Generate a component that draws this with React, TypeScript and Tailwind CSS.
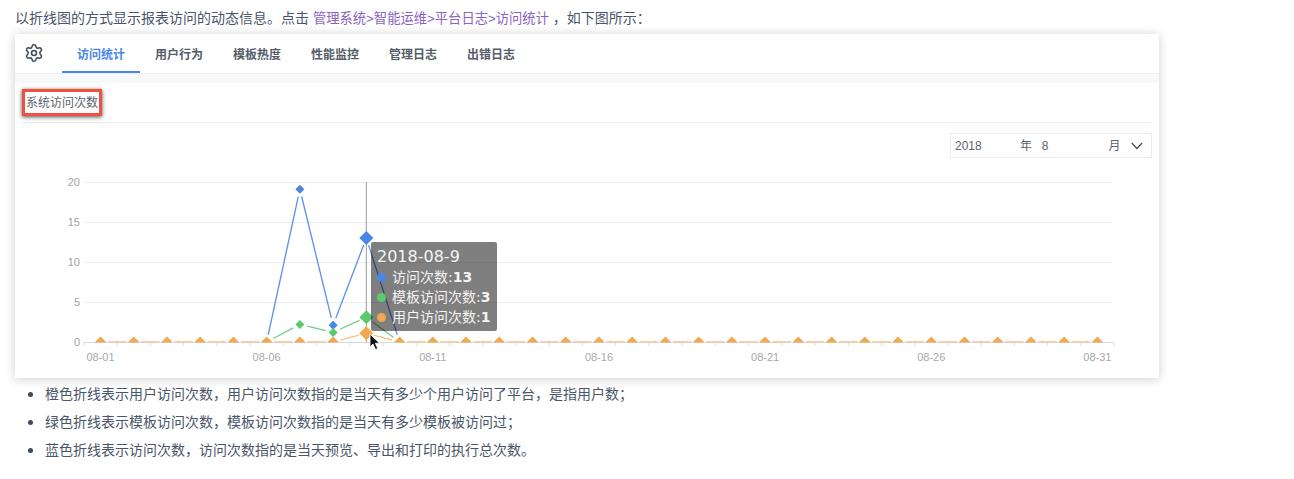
import React from 'react';
import { Settings } from 'lucide-react';

const FONT = "font-['Liberation_Sans','Noto_Sans_CJK_SC',sans-serif]";

const tabs = ['访问统计', '用户行为', '模板热度', '性能监控', '管理日志', '出错日志'];
const notes = [
  '橙色折线表示用户访问次数，用户访问次数指的是当天有多少个用户访问了平台，是指用户数；',
  '绿色折线表示模板访问次数，模板访问次数指的是当天有多少模板被访问过；',
  '蓝色折线表示访问次数，访问次数指的是当天预览、导出和打印的执行总次数。',
];

// chart coordinates are relative to the chart svg (1144 wide, card left edge = 0)
const X0 = 85.5;
const STEP = 33.23;
const BASE = 218;
const UNIT = 8;
const px = (i: number) => X0 + STEP * i;
const py = (v: number) => BASE - v * UNIT;

const zeros = Array.from({ length: 31 }, () => 0);
const withValues = (vals: Record<number, number>) => zeros.map((z, i) => vals[i] ?? z);

const series = [
  { line: '#5b8fe8', dot: '#4a86e8', data: withValues({ 6: 19.1, 7: 2.1, 8: 13 }), from: 5, to: 9, size: 4.5 },
  { line: '#6dd07f', dot: '#5cc96f', data: withValues({ 6: 2.2, 7: 1.2, 8: 3.1 }), from: 5, to: 9, size: 4.5 },
  { line: '#f5c283', dot: '#f0a94f', data: withValues({ 8: 1.1 }), from: 0, to: 30, size: 5.5 },
];

function gappedSegments(data: number[], from: number, to: number, gap: number) {
  const segs: { x1: number; y1: number; x2: number; y2: number }[] = [];
  for (let i = from; i < to; i++) {
    const ax = px(i);
    const ay = py(data[i]);
    const bx = px(i + 1);
    const by = py(data[i + 1]);
    const len = Math.hypot(bx - ax, by - ay);
    const ux = (bx - ax) / len;
    const uy = (by - ay) / len;
    segs.push({ x1: ax + ux * gap, y1: ay + uy * gap, x2: bx - ux * gap, y2: by - uy * gap });
  }
  return segs;
}

const Diamond = ({ x, y, r, color }: { x: number; y: number; r: number; color: string }) => (
  <polygon points={`${x},${y - r} ${x + r},${y} ${x},${y + r} ${x - r},${y}`} fill={color} />
);

function LineChart() {
  const gridY = [0, 5, 10, 15, 20];
  return (
    <svg width="1144" height="240" className="block" viewBox="0 0 1144 240">
      <defs>
        <clipPath id="plot">
          <rect x="60" y="40" width="1060" height={BASE - 40 + 0.5} />
        </clipPath>
      </defs>
      {gridY.map((v) => (
        <g key={v}>
          <line x1="69" x2="1098" y1={py(v) + 0.5} y2={py(v) + 0.5} stroke={v === 0 ? '#d9d9d9' : '#ececec'} />
          <text x="65" y={py(v) + 4} textAnchor="end" fontSize="11" fill="#a3a3a3">
            {v}
          </text>
        </g>
      ))}
      {Array.from({ length: 32 }, (_, i) => (
        <line key={i} x1={69 + STEP * i} x2={69 + STEP * i} y1={BASE} y2={BASE + 4} stroke="#dcdcdc" />
      ))}
      {[0, 5, 10, 15, 20, 25, 30].map((i) => (
        <text key={i} x={px(i)} y={BASE + 19} textAnchor="middle" fontSize="11" fill="#a8a8a8">
          {`08-${String(i + 1).padStart(2, '0')}`}
        </text>
      ))}
      <line x1={px(8)} x2={px(8)} y1="58" y2={BASE} stroke="#9a9a9a" />
      <g clipPath="url(#plot)">
        {series.map((s) => (
          <g key={s.dot}>
            {gappedSegments(s.data, s.from, s.to, 7.5).map((g, i) => (
              <line key={i} {...g} stroke={s.line} strokeWidth="1.3" />
            ))}
            {s.data.map((v, i) =>
              i < s.from || i > s.to || (v === 0 && s.size === 4.5) ? null : (
                <Diamond key={i} x={px(i)} y={py(v)} r={i === 8 ? 7 : s.size} color={s.dot} />
              ),
            )}
          </g>
        ))}
      </g>
    </svg>
  );
}

const tipRows = [
  { color: 'bg-[#4a86e8]', label: '访问次数', value: 13 },
  { color: 'bg-[#5cc96f]', label: '模板访问次数', value: 3 },
  { color: 'bg-[#f0a94f]', label: '用户访问次数', value: 1 },
];

function Tooltip() {
  return (
    <div className="absolute left-[356px] top-[118px] w-[126px] h-[89px] rounded-[2px] bg-black/50 pl-[6px] pt-[5px] text-[#f4f4f4] font-['DejaVu_Sans','Noto_Sans_CJK_SC',sans-serif]">
      <div className="text-[16px] leading-[20px]">2018-08-9</div>
      {tipRows.map((row) => (
        <div key={row.label} className="flex items-center h-[20px] text-[14px] whitespace-nowrap">
          <span className="w-[15px] shrink-0">
            <span className={`block w-[9px] h-[9px] rounded-full ${row.color}`} />
          </span>
          <span>{row.label}:</span>
          <span className="font-bold">{row.value}</span>
        </div>
      ))}
    </div>
  );
}

const Cursor = () => (
  <svg width="12" height="18" viewBox="0 0 12 18" className="absolute left-[354px] top-[209px]">
    <path d="M1 1 L1 14 L4 11 L6.5 16.5 L8.8 15.5 L6.3 10.2 L10.5 10.2 Z" fill="#111" stroke="#fff" strokeWidth="0.8" />
  </svg>
);

export default function App() {
  return (
    <div className={`w-[1294px] h-[479px] overflow-hidden bg-white pl-[15px] pt-[9px] text-[14px] text-[#4a5568] ${FONT}`}>
      <p className="h-[25px] leading-[18px] whitespace-nowrap">
        以折线图的方式显示报表访问的动态信息。点击 <span className="text-[13.3px] text-[#8a63c2]">管理系统&gt;智能运维&gt;平台日志&gt;访问统计</span> ，如下图所示：
      </p>

      <div className="w-[1144px] h-[344px] bg-white shadow-[0_1px_10px_rgba(0,0,0,0.2)]">
        <div className="flex h-[39px] items-stretch">
          <div className="flex w-[47px] items-center pl-[9px] pb-[2px]">
            <Settings size={20} strokeWidth={1.9} color="#454c5c" />
          </div>
          {tabs.map((tab, i) => (
            <div
              key={tab}
              className={`flex w-[78px] items-center justify-center text-[12px] font-bold border-b-2 pt-[4px] ${
                i === 0 ? 'text-[#4a86e8] border-[#4a86e8]' : 'text-[#555c68] border-transparent'
              }`}
            >
              {tab}
            </div>
          ))}
        </div>
        <div className="h-[10px] bg-[#f7f8f9] border-t border-[#eeeeee]" />

        <div className="relative px-[7px]">
          <div className="h-[40px] border-b border-[#ececec] pt-[6px]">
            <div className="flex h-[27px] w-[80px] items-center justify-center border-[3px] border-[#f0503f] text-[12px] text-[#5c6470] shadow-[0_1px_4px_rgba(0,0,0,0.7)]">
              系统访问次数
            </div>
          </div>
          <div className="mt-[10px] flex justify-end">
            <div className="flex h-[25px] w-[202px] items-center border border-[#ececec] pl-[4px] pr-[8px] text-[12px] text-[#5c6470]">
              <span className="w-[66px]">2018</span>
              <span className="w-[22px]">年</span>
              <span className="w-[68px]">8</span>
              <span className="w-[23px]">月</span>
              <svg width="12" height="8" viewBox="0 0 12 8" fill="none" stroke="#4a5060" strokeWidth="1.4">
                <path d="M0.8 1 L6 6.5 L11.2 1" />
              </svg>
            </div>
          </div>
        </div>

        <div className="relative -mt-[34px]">
          <LineChart />
          <Tooltip />
          <Cursor />
        </div>
      </div>

      <ul className="mt-[2px] pl-[13px]">
        {notes.map((note) => (
          <li key={note} className="flex h-[28px] items-center whitespace-nowrap">
            <span className="mr-[12px] h-[5px] w-[5px] rounded-full bg-[#3f4a5c]" />
            {note}
          </li>
        ))}
      </ul>
    </div>
  );
}
